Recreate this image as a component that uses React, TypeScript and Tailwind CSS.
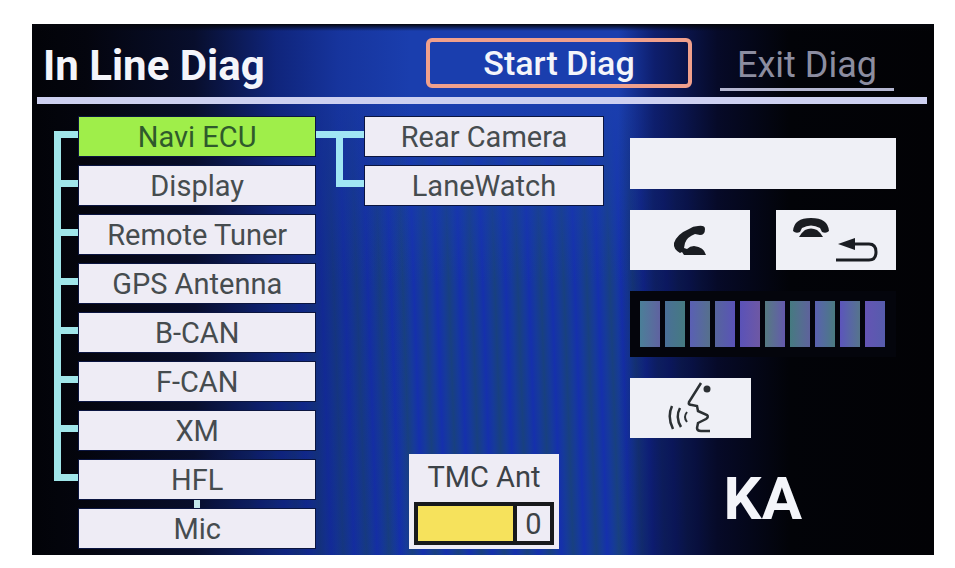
import React from 'react';

const nodes = ['Navi ECU', 'Display', 'Remote Tuner', 'GPS Antenna', 'B-CAN', 'F-CAN', 'XM', 'HFL', 'Mic'];
const cameras = ['Rear Camera', 'LaneWatch'];

const segments = [
  'bg-linear-to-r from-[#4a7f98] to-[#5f62a0]',
  'bg-linear-to-r from-[#4a6f98] to-[#457a80]',
  'bg-linear-to-r from-[#5a5fb4] to-[#56708c]',
  'bg-linear-to-r from-[#56649c] to-[#5a52b8]',
  'bg-linear-to-r from-[#5a52b8] to-[#6e58a4]',
  'bg-linear-to-r from-[#557a80] to-[#6458ac]',
  'bg-linear-to-r from-[#457a80] to-[#5e629c]',
  'bg-linear-to-r from-[#5a60b0] to-[#4a7a80]',
  'bg-linear-to-r from-[#5c54bc] to-[#56748c]',
  'bg-linear-to-r from-[#6454b4] to-[#565cac]',
];

const Node: React.FC<{ label: string; active?: boolean }> = ({ label, active }) => (
  <button
    type="button"
    className={`block h-[41px] w-full border border-[#0b1540] text-center text-[29px] leading-[38px] ${
      active ? 'bg-[#9fee4a] text-[#2f5a2c]' : 'bg-[#eeecf5] text-[#464c4f]'
    }`}
  >
    {label}
  </button>
);

const PhoneIcon = () => (
  <svg width="34" height="31" viewBox="0 0 34 31" fill="#1a1d22" aria-hidden="true">
    <path d="M16 4 Q20 1 25 1 Q32 0 32 4 Q32 10 27 10 L22 9 Q14 12 12 18 L11 23 L14 24 Q17 21 21 21 Q31 22 33 30 L11 30 L9 27 L7 28 Q0 24 1 18 Q4 9 16 4 Z" />
  </svg>
);

const HangUpBackIcon = () => (
  <svg width="85" height="46" viewBox="0 0 85 46" fill="#1a1d22" aria-hidden="true">
    <path d="M0 14 Q1 1 18 1 Q35 1 36 14 Q33 17 29 15 L27 11 Q18 6 9 11 L7 15 Q3 17 0 14 Z" />
    <path d="M6 20 Q8 16 12 13 Q18 10 24 13 Q28 16 30 20 Z" />
    <path d="M60 27 H76 Q83 27 83 35 Q83 43 76 43 H43" fill="none" stroke="#1a1d22" strokeWidth="3" />
    <path d="M45 27 L62 21 V33 Z" />
  </svg>
);

const TalkIcon = () => (
  <svg width="44" height="52" viewBox="0 0 44 52" fill="none" stroke="#2b3033" strokeWidth="2.5" aria-hidden="true">
    <path d="M33 1 L21 20 Q20 23 24 23 L29 24 L30 29 L39 33 Q41 35 38 37 L30 41 L29 46 Q29 49 33 49 H42" />
    <circle cx="39" cy="7" r="3.5" fill="#2b3033" stroke="none" />
    <path d="M4 24 Q-1 35 5 47" />
    <path d="M12 26 Q7 35 13 45" />
    <path d="M19 30 Q15 35 19 40" strokeWidth="2" />
  </svg>
);

const App: React.FC = () => {
  return (
    <div className="bg-white pt-6 pr-[21px] pb-[13px] pl-8 font-[Roboto,sans-serif]">
      <main className="bg-[linear-gradient(180deg,#05060c_0px,transparent_7px),linear-gradient(90deg,#020308_0%,#04050e_6%,#080e2c_18%,#0d1f70d0_27%,#10248060_34%,transparent_42%,transparent_65%,#0a1458c0_69%,#060a28_76%,#020308_84%,#020205_100%),linear-gradient(180deg,#1a3eae_0px,#1a3eae_80px,#1a3eae00_260px),repeating-linear-gradient(88deg,#1530ac_0px,#163a9a_6px,#184080_12px,#163a9a_18px,#1530ac_23px)]">
        {/* Title bar */}
        <header className="mr-[7px] ml-[5px] flex h-20 items-end border-b-[7px] border-[#cdd0f0] pl-[6px]">
          <h1 className="flex-1 pb-[9px] text-[42px] leading-[44px] font-bold text-[#f4f5fa]">In Line Diag</h1>
          <button
            type="button"
            className="mr-7 mb-[9px] h-[50px] w-[266px] rounded-md border-4 border-[#f0a08c] text-[34px] leading-[42px] font-medium text-[#f4f5fa]"
          >
            Start Diag
          </button>
          <button
            type="button"
            className="mr-[33px] mb-[6px] h-[50px] w-[174px] border-b-[3px] border-[#b4b6d0] text-[36px] leading-[42px] text-[#8c8da0]"
          >
            Exit Diag
          </button>
        </header>

        <div className="grid grid-cols-[262fr_48px_239fr_292fr] pt-3 pr-[38px] pb-[6px] pl-[22px]">
          {/* Unit tree */}
          <div className="flex">
            <div className="mt-[15px] flex h-[350px] w-6 flex-col justify-between border-l-[7px] border-[#a0e6ea]">
              {nodes.slice(0, 8).map((node) => (
                <div key={node} className="h-[7px] bg-[#a0e6ea]"></div>
              ))}
            </div>
            <div className="flex flex-1 flex-col">
              {nodes.map((node, index) => (
                <React.Fragment key={node}>
                  {index > 0 && (
                    <div className={`mx-auto h-2 w-[6px] ${node === 'Mic' ? 'bg-[#c4e8ec]' : ''}`}></div>
                  )}
                  <Node label={node} active={index === 0} />
                </React.Fragment>
              ))}
            </div>
          </div>

          {/* Branch to the cameras */}
          <div className="mt-[15px]">
            <div className="h-[7px] bg-[#a0e6f4]"></div>
            <div className="ml-5 h-[49px] border-b-[7px] border-l-[7px] border-[#a0e6f4]"></div>
          </div>

          <div className="flex flex-col gap-2">
            {cameras.map((camera) => (
              <Node key={camera} label={camera} />
            ))}
            <section className="mx-auto mt-auto h-[95px] w-[150px] bg-[#eeecf5] px-[5px] text-center text-[#3c4247]">
              <h2 className="h-12 text-[29px] leading-[46px]">TMC Ant</h2>
              <div className="flex h-[43px] border-4 border-[#17191c] text-[29px] leading-[36px]">
                <div className="flex-1 border-r-4 border-[#17191c] bg-[#f6e25c]"></div>
                <output className="w-[33px]">0</output>
              </div>
            </section>
          </div>

          <div className="ml-[26px] flex flex-col gap-[21px] pt-[22px]">
            <input aria-label="Message" readOnly className="h-[51px] w-full bg-[#eff0f6]" />
            <div className="grid grid-cols-2 gap-[26px]">
              <button type="button" aria-label="Pick up" className="flex h-[60px] items-center justify-center bg-[#eff0f6]">
                <PhoneIcon />
              </button>
              <button type="button" aria-label="Hang up / back" className="flex h-[60px] items-center justify-center bg-[#eff0f6]">
                <HangUpBackIcon />
              </button>
            </div>
            <div className="flex h-[66px] gap-[5px] bg-[#04050c] py-[10px] pl-[10px]">
              {segments.map((color, index) => (
                <div key={index} className={`w-5 ${color}`}></div>
              ))}
            </div>
            <button type="button" aria-label="Talk" className="flex h-[60px] w-[121px] items-center justify-center bg-[#eff0f6]">
              <TalkIcon />
            </button>
            <p className="text-center text-[60px] leading-[80px] font-bold text-[#f4f5fa]">KA</p>
          </div>
        </div>
      </main>
    </div>
  );
};

export default App;
